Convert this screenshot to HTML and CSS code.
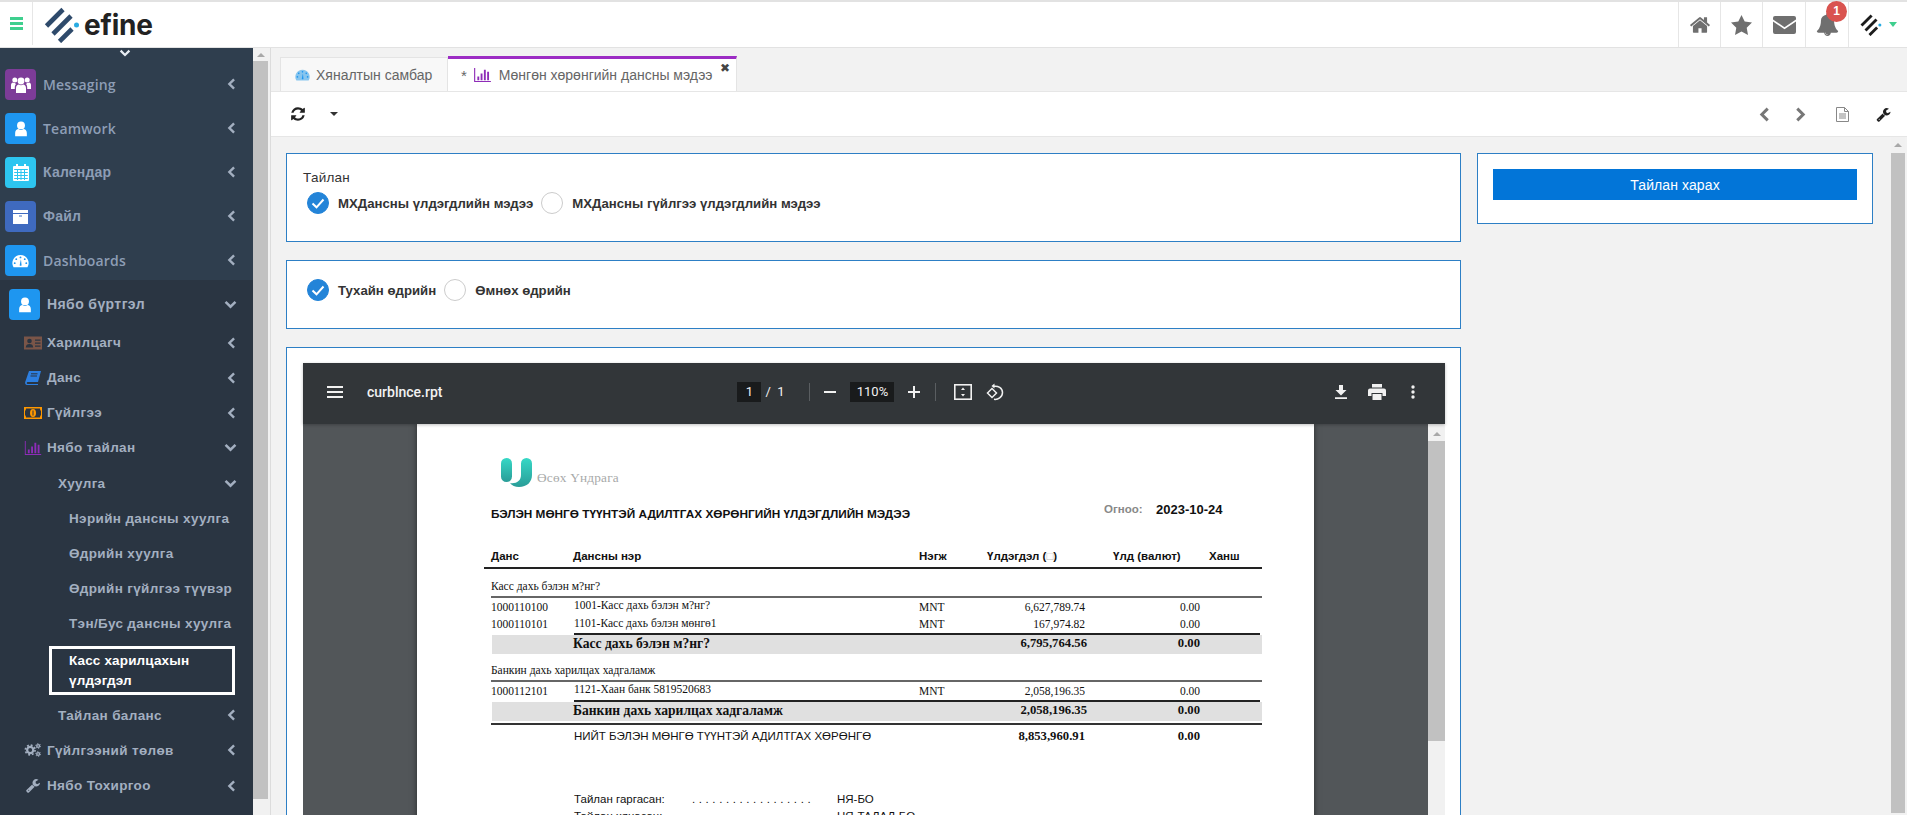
FILE: index.html
```html
<!DOCTYPE html>
<html lang="mn">
<head>
<meta charset="utf-8">
<title>efine</title>
<link rel="stylesheet" href="styles.css">
</head>
<body>
<svg class="defs" width="0" height="0" aria-hidden="true">
  <symbol id="chev-left" viewBox="0 0 10 14"><path d="M8 1.500 2.500 7 8 12.500" fill="none" stroke="currentColor" stroke-width="2.800"/></symbol>
  <symbol id="chev-down" viewBox="0 0 14 10"><path d="M1.500 2 7 7.500 12.500 2" fill="none" stroke="currentColor" stroke-width="2.800"/></symbol>
  <symbol id="user" viewBox="0 0 20 20"><circle cx="10" cy="6" r="4.400" fill="#fff"/><path d="M3.500 18v-3.500c0-3 2-4.500 3.600-4.500 1 .8 1.900 1.200 2.900 1.200s1.900-.4 2.900-1.200c1.600 0 3.600 1.500 3.600 4.500V18z" fill="#fff"/></symbol>
  <symbol id="gauge" viewBox="0 0 20 16"><path d="M10 1a9.500 9.500 0 0 0-8.200 14.300h16.400A9.500 9.500 0 0 0 10 1z" fill="currentColor"/><circle cx="10" cy="3.800" r="1.100" class="hole"/><circle cx="5" cy="5.800" r="1.100" class="hole"/><circle cx="15" cy="5.800" r="1.100" class="hole"/><circle cx="3.200" cy="10.500" r="1.100" class="hole"/><circle cx="16.800" cy="10.500" r="1.100" class="hole"/><path d="M9 13 10.500 6l.8 7a1.300 1.300 0 0 1-2.300 0z" class="hole"/></symbol>
  <symbol id="bars" viewBox="0 0 18 15"><path d="M.6 0v14.400H18" fill="none" stroke="currentColor" stroke-width="1.200"/><path d="M3.500 9h2v4h-2zM7 6h2v7H7zM10.500 2h2v11h-2zM14 4h2v9h-2z" fill="currentColor"/></symbol>
  <symbol id="mark" viewBox="0 0 36 36"><g fill="none" stroke="currentColor" stroke-width="4.600"><path d="M2.500 19 19 2.500"/><path d="M9 27 27 9"/><path d="M15.500 34.500 28 22"/></g><circle cx="32.500" cy="18" r="2.500" fill="#29abe2"/></symbol>
  <symbol id="wrench" viewBox="0 0 1792 1792"><path fill="currentColor" d="M448 1472q0-26-19-45t-45-19-45 19-19 45 19 45 45 19 45-19 19-45zm644-420l-682 682q-37 37-90 37-52 0-91-37l-106-108q-38-36-38-90 0-53 38-91l681-681q39 98 114.500 173.500t173.500 114.500zm634-435q0 39-23 106-47 134-164.500 217.500t-258.500 83.500q-185 0-316.500-131.500t-131.500-316.500 131.500-316.500 316.500-131.500q58 0 121.500 16.500t107.500 46.500q16 11 16 28t-16 28l-293 169v224l193 107q5-3 79-48.500t135.500-81 70.500-35.500q15 0 23.500 10t8.500 25z"/></symbol>
</svg>

<header class="topbar">
  <button class="hamburger" aria-label="menu"><i></i><i></i><i></i></button>
  <div class="brand">
    <svg class="brand-mark"><use href="#mark"/></svg>
    <span class="brand-name">efine</span>
  </div>
  <nav class="top-actions">
    <a class="top-action">
      <svg width="22" height="22" viewBox="0 0 1792 1792"><path fill="#6f6f6f" d="M1472 992v480q0 26-19 45t-45 19h-384v-384h-256v384h-384q-26 0-45-19t-19-45v-480q0-1 .5-3t.5-3l575-474 575 474q1 2 1 6zm223-69l-62 74q-8 9-21 11h-3q-13 0-21-7l-692-577-692 577q-12 8-24 7-13-2-21-11l-62-74q-8-10-7-23.500t11-21.500l719-599q32-26 76-26t76 26l244 204v-195q0-14 9-23t23-9h192q14 0 23 9t9 23v408l219 182q10 8 11 21.500t-7 23.500z"/></svg>
    </a>
    <a class="top-action">
      <svg width="21" height="20" viewBox="0 0 21 20"><path d="m10.500 0 3.200 6.600 7.300 1-5.300 5.100 1.300 7.300-6.500-3.500L4 20l1.300-7.300L0 7.600l7.300-1z" fill="#6f6f6f"/></svg>
    </a>
    <a class="top-action">
      <svg width="23" height="18" viewBox="0 0 23 18"><path d="M2 0h19a2 2 0 0 1 2 2v1.500l-11.500 7.700L0 3.500V2a2 2 0 0 1 2-2z" fill="#6f6f6f"/><path d="M0 5.500l11.500 7.700L23 5.500V16a2 2 0 0 1-2 2H2a2 2 0 0 1-2-2z" fill="#6f6f6f"/></svg>
    </a>
    <a class="top-action bell">
      <svg width="23" height="23" viewBox="0 0 1792 1792"><path fill="#6f6f6f" d="M912 1696q0-16-16-16-59 0-101.500-42.500t-42.500-101.500q0-16-16-16t-16 16q0 73 51.500 124.500t124.500 51.500q16 0 16-16zm816-288q0 52-38 90t-90 38h-448q0 106-75 181t-181 75-181-75-75-181h-448q-52 0-90-38t-38-90q50-42 91-88t85-119.500 74.500-158.500 50-206 19.500-260q0-152 117-282.500t307-158.500q-8-19-8-39 0-40 28-68t68-28 68 28 28 68q0 20-8 39 190 28 307 158.500t117 282.500q0 139 19.500 260t50 206 74.500 158.500 85 119.500 91 88z"/></svg>
      <span class="badge">1</span>
    </a>
    <a class="top-action user-menu">
      <svg class="mini-mark"><use href="#mark"/></svg>
      <span class="caret-green"></span>
    </a>
  </nav>
</header>

<div class="shell">
  <aside class="sidebar">
    <div class="side-top">
      <div class="side-more"><svg width="12" height="8"><use href="#chev-down"/></svg></div>
      <a class="mod"><span class="mod-ico purple"><svg width="20" height="18" viewBox="0 0 20 18"><circle cx="10" cy="5" r="3.400" fill="#fff"/><circle cx="3.800" cy="4" r="2.500" fill="#fff"/><circle cx="16.200" cy="4" r="2.500" fill="#fff"/><path d="M5 17v-5c0-2 1.500-3.500 2.800-3.500.7.500 1.400.8 2.200.8s1.500-.3 2.200-.8C13.500 8.500 15 10 15 12v5z" fill="#fff"/><path d="M0 13V9c0-1.500 1-2.500 2-2.500.5.400 1.200.6 1.800.6L5 8c-.8.8-1.200 2-1.200 3.500V13zM20 13V9c0-1.500-1-2.500-2-2.500-.5.400-1.200.6-1.800.6L15 8c.8.800 1.200 2 1.200 3.500V13z" fill="#fff"/></svg></span><span class="mod-label latin">Messaging</span><svg class="chev"><use href="#chev-left"/></svg></a>
      <a class="mod"><span class="mod-ico blue"><svg width="18" height="18"><use href="#user"/></svg></span><span class="mod-label latin">Teamwork</span><svg class="chev"><use href="#chev-left"/></svg></a>
      <a class="mod"><span class="mod-ico cyan"><svg width="16" height="17" viewBox="0 0 16 17"><path d="M1 2h14a1 1 0 0 1 1 1v13a1 1 0 0 1-1 1H1a1 1 0 0 1-1-1V3a1 1 0 0 1 1-1z" fill="#fff"/><path d="M3 0h2v3.500H3zM11 0h2v3.500h-2z" fill="#fff"/><path d="M1.200 5.500h13.600M1.200 8.500h13.600M1.200 11.500h13.600M1.200 14.500h13.600M4.500 5v11M8 5v11M11.500 5v11" stroke="#2dc5f0" stroke-width="1"/></svg></span><span class="mod-label">Календар</span><svg class="chev"><use href="#chev-left"/></svg></a>
      <a class="mod"><span class="mod-ico indigo"><svg width="15" height="14" viewBox="0 0 15 14"><path d="M0 0h15v3H0z" fill="#fff"/><path d="M0 4h15v10H0z" fill="#fff"/><path d="M6 5.500h3v1H6z" fill="#3f6abf"/></svg></span><span class="mod-label">Файл</span><svg class="chev"><use href="#chev-left"/></svg></a>
      <a class="mod"><span class="mod-ico blue"><svg class="gauge-white" width="17" height="14"><use href="#gauge"/></svg></span><span class="mod-label latin">Dashboards</span><svg class="chev"><use href="#chev-left"/></svg></a>
    </div>
    <div class="side-open">
      <a class="mod open"><span class="mod-ico blue"><svg width="18" height="18"><use href="#user"/></svg></span><span class="mod-label">Нябо бүртгэл</span><svg class="chevd"><use href="#chev-down"/></svg></a>
      <ul class="tree">
        <li class="node"><svg class="node-ico" viewBox="0 0 18 13"><rect width="18" height="13" fill="#7a5548"/><circle cx="5.500" cy="4.500" r="2.300" fill="#2a3441"/><path d="M1.800 11c0-2.400 1.500-3.500 3.700-3.500s3.700 1.100 3.700 3.500zM11 3h5.500v1.200H11zM11 6h5.500v1.200H11zM11 9h5.500v1.200H11z" fill="#2a3441"/></svg><span>Харилцагч</span><svg class="chev"><use href="#chev-left"/></svg></li>
        <li class="node"><svg class="node-ico" viewBox="0 0 16 14"><path d="M4 0h12l-3 11H2.500c-1 0-1 2 0 2H13v1H2c-1.500 0-2.200-1.500-1.800-3z" fill="#2d7fe0"/><path d="M6 2.800h6.500M5.500 5h6.500" stroke="#2a3441" stroke-width="1"/></svg><span>Данс</span><svg class="chev"><use href="#chev-left"/></svg></li>
        <li class="node"><svg class="node-ico" viewBox="0 0 18 12"><rect width="18" height="12" fill="#ff9800"/><path d="M2 1.500h14c0 1 .5 2 1 2.500v4c-.5.500-1 1.500-1 2.500H2C2 9.500 1.500 8.500 1 8V4c.5-.5 1-1.500 1-2.500z" fill="#2a3441"/><ellipse cx="9" cy="6" rx="3" ry="4" fill="#ff9800"/><path d="M8.500 3.500h1v5h-1z" fill="#2a3441"/></svg><span>Гүйлгээ</span><svg class="chev"><use href="#chev-left"/></svg></li>
        <li class="node"><svg class="node-ico bars-purple" viewBox="0 0 18 15"><use href="#bars"/></svg><span>Нябо тайлан</span><svg class="chevd"><use href="#chev-down"/></svg></li>
        <li class="node lvl2"><span>Хуулга</span><svg class="chevd"><use href="#chev-down"/></svg></li>
        <li class="node lvl3"><span>Нэрийн дансны хуулга</span></li>
        <li class="node lvl3"><span>Өдрийн хуулга</span></li>
        <li class="node lvl3"><span>Өдрийн гүйлгээ түүвэр</span></li>
        <li class="node lvl3"><span>Тэн/Бус дансны хуулга</span></li>
        <li class="node selected"><span>Касс харилцахын үлдэгдэл</span></li>
        <li class="node lvl2 lvl2b"><span>Тайлан баланс</span><svg class="chev"><use href="#chev-left"/></svg></li>
        <li class="node"><svg class="node-ico" viewBox="0 0 18 15"><g fill="none" stroke="#a3afc0"><circle cx="6" cy="7.500" r="3.300" stroke-width="2.400"/><circle cx="6" cy="7.500" r="5.200" stroke-width="1.800" stroke-dasharray="2 2.080"/><circle cx="14.500" cy="3.200" r="1.500" stroke-width="1.500"/><circle cx="14.500" cy="3.200" r="2.600" stroke-width="1" stroke-dasharray="1.300 1.420"/><circle cx="14.500" cy="11.800" r="1.500" stroke-width="1.500"/><circle cx="14.500" cy="11.800" r="2.600" stroke-width="1" stroke-dasharray="1.300 1.420"/></g></svg><span>Гүйлгээний төлөв</span><svg class="chev"><use href="#chev-left"/></svg></li>
        <li class="node"><svg class="node-ico wrench-side"><use href="#wrench"/></svg><span>Нябо Тохиргоо</span><svg class="chev"><use href="#chev-left"/></svg></li>
      </ul>
    </div>
  </aside>

  <div class="side-scroll"><span class="arrow-up"></span><span class="thumb"></span></div>

  <main class="main">
    <div class="tabs">
      <a class="tab"><svg class="gauge-sky" width="15" height="12"><use href="#gauge"/></svg>Хяналтын самбар</a>
      <a class="tab active"><span class="star">*</span><svg class="bars-purple" width="17" height="14" viewBox="0 0 18 15"><use href="#bars"/></svg><span class="tab-text">Мөнгөн хөрөнгийн дансны мэдээ</span><span class="tab-close">✖</span></a>
    </div>
    <div class="toolbar">
      <svg class="refresh" width="16" height="16" viewBox="0 0 1792 1792"><path fill="#222" d="M1639 1056q0 5-1 7-64 268-268 434.500t-478 166.500q-146 0-282.500-55t-243.500-157l-129 129q-19 19-45 19t-45-19-19-45v-448q0-26 19-45t45-19h448q26 0 45 19t19 45-19 45l-137 137q71 66 161 102t187 36q134 0 250-65t186-179q11-17 53-117 8-23 30-23h192q13 0 22.500 9.500t9.500 22.500zm25-800v448q0 26-19 45t-45 19h-448q-26 0-45-19t-19-45 19-45l138-138q-148-137-349-137-134 0-250 65t-186 179q-11 17-53 117-8 23-30 23h-199q-13 0-22.500-9.500t-9.500-22.500v-7q65-268 270-434.500t480-166.500q146 0 284 55.500t245 156.500l130-129q19-19 45-19t45 19 19 45z"/></svg>
      <span class="caret-dark"></span>
      <span class="spacer"></span>
      <svg class="tool-nav" width="11" height="15"><use href="#chev-left"/></svg>
      <svg class="tool-nav flip" width="11" height="15"><use href="#chev-left"/></svg>
      <svg class="tool-file" width="13" height="15" viewBox="0 0 13 15"><path d="M.5.500h8l4 4v10H.5z" fill="#fff" stroke="#888"/><path d="M8.500.500v4h4M3 7h7M3 9h7M3 11h7" fill="none" stroke="#888"/></svg>
      <svg class="tool-wrench" width="15" height="15"><use href="#wrench"/></svg>
    </div>
    <div class="content">
      <div class="content-body">
        <div class="col-main">
          <section class="panel panel-report">
            <div class="panel-title">Тайлан</div>
            <div class="radios">
              <label class="radio on"><span class="dot"><svg width="14" height="11" viewBox="0 0 14 11"><path d="M1.500 5.500 5.500 9.300 12.500 1.500" fill="none" stroke="#fff" stroke-width="2"/></svg></span>МХДансны үлдэгдлийн мэдээ</label>
              <label class="radio"><span class="dot"></span>МХДансны гүйлгээ үлдэгдлийн мэдээ</label>
            </div>
          </section>
          <section class="panel panel-date">
            <div class="radios">
              <label class="radio on"><span class="dot"><svg width="14" height="11" viewBox="0 0 14 11"><path d="M1.500 5.500 5.500 9.300 12.500 1.500" fill="none" stroke="#fff" stroke-width="2"/></svg></span>Тухайн өдрийн</label>
              <label class="radio"><span class="dot"></span>Өмнөх өдрийн</label>
            </div>
          </section>
          <section class="panel panel-pdf">
            <div class="viewer">
              <div class="pdf-bar">
                <svg class="pdf-menu" width="16" height="12" viewBox="0 0 16 12"><path d="M0 0h16v2H0zM0 5h16v2H0zM0 10h16v2H0z" fill="#f1f1f1"/></svg>
                <span class="pdf-name">curblnce.rpt</span>
                <div class="pdf-center">
                  <span class="pdf-box page-box">1</span>
                  <span class="pdf-count">/&nbsp;&nbsp;1</span>
                  <i class="pdf-sep"></i>
                  <svg width="12" height="2"><rect width="12" height="2" fill="#f1f1f1"/></svg>
                  <span class="pdf-box zoom-box">110%</span>
                  <svg width="12" height="12"><path d="M5 0h2v5h5v2H7v5H5V7H0V5h5z" fill="#f1f1f1"/></svg>
                  <i class="pdf-sep sep2"></i>
                  <svg class="pdf-fit" width="18" height="16" viewBox="0 0 18 16"><rect x=".8" y=".8" width="16.400" height="14.400" fill="none" stroke="#f1f1f1" stroke-width="1.600"/><path d="M9 3.500 11 6H7zM9 12.500 7 10h4z" fill="#f1f1f1"/></svg>
                  <svg class="pdf-rot" width="18" height="18" viewBox="0 0 18 18"><path d="M1.500 10 6 5.500l4.500 4.500L6 14.500z" fill="none" stroke="#f1f1f1" stroke-width="1.500"/><path d="M7.500 3.300c4.500-.8 9 1.500 9 6.200S11.800 17 8 16.300" fill="none" stroke="#f1f1f1" stroke-width="1.500"/><path d="M8.500.5v5l-3-2.500z" fill="#f1f1f1"/></svg>
                </div>
                <div class="pdf-right">
                  <svg width="12" height="14" viewBox="0 0 12 14"><path d="M4 0h4v5h3.500L6 10.500.5 5H4zM0 12.300h12V14H0z" fill="#f1f1f1"/></svg>
                  <svg width="18" height="16" viewBox="0 0 18 16"><path d="M4 0h10v3.500H4zM2 4.500h14a2 2 0 0 1 2 2V12h-3.500V9h-11v3H0V6.500a2 2 0 0 1 2-2zM4.500 10h9v6h-9z" fill="#f1f1f1"/></svg>
                  <svg class="pdf-more" width="4" height="14" viewBox="0 0 4 14"><circle cx="2" cy="2" r="1.700" fill="#f1f1f1"/><circle cx="2" cy="7" r="1.700" fill="#f1f1f1"/><circle cx="2" cy="12" r="1.700" fill="#f1f1f1"/></svg>
                </div>
              </div>
              <div class="pdf-stage">
                <div class="pdf-well">
                  <article class="page">
                    <div class="doc-logo">
                      <svg width="31" height="29" viewBox="0 0 31 29"><defs><linearGradient id="lg" x1="0" y1="0" x2="0" y2="1"><stop offset="0" stop-color="#36d8c6"/><stop offset="1" stop-color="#2a9d98"/></linearGradient></defs><rect width="11" height="24" rx="5.500" fill="url(#lg)"/><path d="M20 5.500a5.500 5.500 0 0 1 11 0V17c0 7-5 12-13 12-4 0-7-1.500-9-4 6 1 11-2 11-8z" fill="url(#lg)"/></svg>
                      <span class="doc-brand">Өсөх Үндрага</span>
                    </div>
                    <div class="doc-title-row">
                      <span class="doc-title">БЭЛЭН МӨНГӨ ТҮҮНТЭЙ АДИЛТГАХ ХӨРӨНГИЙН ҮЛДЭГДЛИЙН МЭДЭЭ</span>
                      <span class="doc-date-label">Огноо:</span>
                      <span class="doc-date">2023-10-24</span>
                    </div>
                    <div class="row head"><span>Данс</span><span>Дансны нэр</span><span>Нэгж</span><span class="hbal">Үлдэгдэл (<b class="tofu">□</b>)</span><span class="hval">Үлд (валют)</span><span class="hrate">Ханш</span></div>
                    <div class="group">Касс дахь бэлэн м?нг?</div>
                    <div class="row line"><span>1000110100</span><span class="name">1001-Касс дахь бэлэн м?нг?</span><span>MNT</span><span class="num">6,627,789.74</span><span class="num">0.00</span></div>
                    <div class="row line short"><span>1000110101</span><span class="name">1101-Касс дахь бэлэн мөнгө1</span><span>MNT</span><span class="num">167,974.82</span><span class="num">0.00</span></div>
                    <div class="rule"></div>
                    <div class="row sum"><span></span><span class="sum-name">Касс дахь бэлэн м?нг?</span><span></span><span class="num">6,795,764.56</span><span class="num">0.00</span></div>
                    <div class="group second">Банкин дахь харилцах хадгаламж</div>
                    <div class="row line"><span>1000112101</span><span class="name">1121-Хаан банк 5819520683</span><span>MNT</span><span class="num">2,058,196.35</span><span class="num">0.00</span></div>
                    <div class="rule"></div>
                    <div class="row sum"><span></span><span class="sum-name">Банкин дахь харилцах хадгаламж</span><span></span><span class="num">2,058,196.35</span><span class="num">0.00</span></div>
                    <div class="rule full"></div>
                    <div class="row grand"><span></span><span class="grand-name">НИЙТ БЭЛЭН МӨНГӨ ТҮҮНТЭЙ АДИЛТГАХ ХӨРӨНГӨ</span><span></span><span class="num">8,853,960.91</span><span class="num">0.00</span></div>
                    <div class="sign first"><span class="sign-role">Тайлан гаргасан:</span><span class="sign-dots">. . . . . . . . . . . . . . . . . .</span><span>НЯ-БО</span></div>
                    <div class="sign"><span class="sign-role">Тайлан хянасан:</span><span class="sign-dots">. . . . . . . . . . . . . . . . . .</span><span>НЯ-ТАЛАЛ-БО</span></div>
                  </article>
                </div>
                <div class="pdf-scroll"><span class="arrow-up"></span><span class="thumb"></span></div>
              </div>
            </div>
          </section>
        </div>
        <aside class="col-side">
          <section class="panel panel-action"><button class="view-btn">Тайлан харах</button></section>
        </aside>
      </div>
      <div class="main-scroll"><span class="arrow-up"></span><span class="thumb"></span></div>
    </div>
  </main>
</div>
</body>
</html>
```
FILE: styles.css
```css
* { box-sizing: border-box; }
html, body { margin: 0; height: 815px; overflow: hidden; }
body { background: #f2f2f2; font-family: "Liberation Sans", Arial, sans-serif; color: #333; display: flex; flex-direction: column; }
.defs { position: absolute; }
a { color: inherit; text-decoration: none; }
svg { display: block; flex: none; }
.hole { fill: #1e96f0; }

/* top bar */
.topbar { height: 48px; flex: none; display: flex; align-items: stretch; background: #fff; border-top: 2px solid #e2e2e2; border-bottom: 1px solid #e2e2e2; }
.hamburger { width: 33px; border: 0; border-right: 1px solid #e6e6e6; background: #fff; display: flex; flex-direction: column; gap: 2.500px; justify-content: center; align-items: center; padding: 0; margin-bottom: 2px; }
.hamburger i { display: block; width: 13px; height: 2.500px; background: #3ecf8e; }
.brand { display: flex; align-items: center; padding-left: 11px; }
.brand-mark { width: 36px; height: 36px; color: #2e4a6b; }
.brand-name { font-family: "Inter", sans-serif; font-weight: 700; font-size: 28px; line-height: 1; color: #222; margin-left: 4px; letter-spacing: -.2px; }
.top-actions { margin-left: auto; display: flex; }
.top-action { width: 42px; border-left: 1px solid #e6e6e6; display: flex; align-items: center; justify-content: center; position: relative; }
.top-action:nth-child(3), .top-action:nth-child(4) { width: 43px; }
.badge { position: absolute; left: 20px; top: -1px; width: 21px; height: 21px; border-radius: 50%; background: #d9534f; color: #fff; font-size: 12px; font-weight: 700; line-height: 21px; text-align: center; }
.user-menu { width: 59px; justify-content: flex-start; padding-left: 11px; gap: 7px; }
.mini-mark { width: 22px; height: 22px; color: #1c1c1c; }
.caret-green { width: 0; height: 0; border: 4px solid transparent; border-top: 5px solid #3ecf8e; border-bottom: 0; }

/* sidebar */
.shell { flex: 1; min-height: 0; display: flex; }
.sidebar { width: 253px; flex: none; display: flex; flex-direction: column; background: #2a3542; overflow: hidden; }
.side-top { height: 232px; background: #2f3e4e; flex: none; }
.side-more { height: 21px; display: flex; justify-content: center; padding: 1px 4px 0 0; }
.side-more svg { color: #e8edf3; }
.mod { height: 44px; display: flex; align-items: flex-start; padding-left: 5px; color: #8d9db5; }
.mod-ico { width: 31px; height: 31px; border-radius: 4px; flex: none; display: flex; align-items: center; justify-content: center; color: #fff; }
.purple { background: #7d3c98; }
.blue { background: #1e96f0; }
.cyan { background: #2dc5f0; }
.indigo { background: #3f6abf; }
.gauge-white { color: #fff; }
.mod-label { margin-left: 7px; font-size: 14px; line-height: 31px; font-weight: 700; letter-spacing: .2px; }
.mod-label.latin { font-family: "Open Sans", sans-serif; font-weight: 600; font-size: 14px; }
.chev { width: 9px; height: 12px; margin-left: auto; margin-right: 17px; margin-top: 9px; color: #a3afc0; }
.chevd { width: 13px; height: 9px; margin-left: auto; margin-right: 16px; color: #a3afc0; }
.side-open { flex: 1; padding-top: 9px; }
.mod.open { padding-left: 9px; height: 36px; color: #a3afc0; }
.mod.open .chevd { margin-top: 11px; }
.mod.open .mod-label { letter-spacing: .4px; }
.tree { list-style: none; margin: 0; padding: 0; color: #a3afc0; font-size: 13.500px; font-weight: 700; letter-spacing: .35px; }
.node { height: 35.150px; display: flex; align-items: center; padding-left: 24px; }
.node-ico { width: 18px; height: 14px; margin-right: 5px; flex: none; }
.wrench-side { color: #a3afc0; height: 15px; }
.node .chev, .node .chevd { margin-top: 0; }
.node > span:first-child { margin-left: 23px; }
.node.lvl2 > span:first-child { margin-left: 34px; }
.node.lvl3 > span:first-child { margin-left: 45px; }
.node.selected { height: 49px; margin: 5px 18px 2.500px 49px; padding: 0 10px 0 17px; border: 3px solid #fff; color: #fff; line-height: 20px; letter-spacing: .15px; }
.node.selected > span:first-child { margin-left: 0; }
.bars-purple { color: #8e2cb8; }

.side-scroll { width: 18px; flex: none; background: #f1f1f1; border-right: 1px solid #dcdcdc; display: flex; flex-direction: column; align-items: center; padding: 5px 2px 0 0; }
.arrow-up { width: 0; height: 0; border: 4px solid transparent; border-bottom: 4px solid #a8a8a8; border-top: 0; flex: none; }
.thumb { display: block; background: #c1c1c1; width: 100%; }
.side-scroll .thumb { margin-top: 4px; height: 738px; }

/* main */
.main { flex: 1; min-width: 0; display: flex; flex-direction: column; }
.tabs { height: 43px; flex: none; display: flex; align-items: flex-end; padding-left: 9px; }
.tab { height: 34px; display: flex; align-items: center; gap: 6px; padding: 0 11px 0 14px; background: #f8f8f8; border: 1px solid #e4e4e4; border-bottom: 0; color: #666; font-size: 14px; width: 168px; }
.gauge-sky { color: #87c5ee; }
.gauge-sky .hole { fill: #fff; }
.tab.active { width: 289px; height: 35px; background: #fff; border-top: 3px solid #9c2cc4; border-left: 0; padding: 0 0 0 13px; position: relative; gap: 7px; }
.tab-text { margin-left: 1px; }
.star { font-size: 15px; }
.tab-close { position: absolute; right: 6px; top: 2px; font-size: 12px; color: #444; }
.toolbar { height: 46px; flex: none; background: #fff; border-top: 1px solid #e6e6e6; border-bottom: 1px solid #e6e6e6; display: flex; align-items: center; padding-left: 19px; }
.caret-dark { width: 0; height: 0; border: 4px solid transparent; border-top: 4px solid #333; border-bottom: 0; margin-left: 24px; }
.spacer { flex: 1; }
.tool-nav { color: #777; margin-right: 25px; }
.tool-nav.flip { transform: scaleX(-1); margin-right: 30px; }
.tool-file { margin-right: 27px; }
.tool-wrench { margin-right: 16px; color: #222; }

.content { flex: 1; min-height: 0; display: flex; }
.content-body { flex: 1; min-width: 0; display: flex; gap: 16px; padding: 16px 18px 0 15px; overflow: hidden; }
.col-main { width: 1175px; flex: none; display: flex; flex-direction: column; gap: 18px; }
.col-side { flex: 1; min-width: 0; }
.panel { background: #fff; border: 1px solid #2d7fc5; }
.panel-report { height: 89px; padding: 15px 15px 0 16px; flex: none; }
.panel-title { font-size: 13.500px; line-height: 18px; letter-spacing: .25px; color: #333; }
.radios { display: flex; gap: 8px; padding-left: 4px; margin-top: 3px; }
.panel-report .radios { margin-top: 5px; }
.radio { display: flex; align-items: center; gap: 9px; font-size: 13.200px; font-weight: 700; color: #333; }
.dot { width: 22px; height: 22px; border-radius: 50%; border: 1px solid #ccc; display: flex; align-items: center; justify-content: center; background: #fff; flex: none; }
.radio.on .dot { background: #2384d8; border-color: #2384d8; }
.panel-date { height: 69px; flex: none; padding: 15px 0 0 16px; }
.panel-pdf { flex: 1; min-height: 0; padding: 15px 15px 0 16px; border-bottom: 0; overflow: hidden; }
.viewer { height: 100%; display: flex; flex-direction: column; }
.pdf-bar { height: 61px; flex: none; background: #323639; display: flex; align-items: center; padding: 0 0 4px 24px; position: relative; z-index: 1; box-shadow: 0 1px 3px rgba(0,0,0,.25); color: #f1f1f1; }
.pdf-name { margin-left: 24px; font-family: "Roboto", sans-serif; font-weight: 500; font-size: 14px; }
.pdf-center { display: flex; align-items: center; margin-left: 295px; font-family: "Roboto", sans-serif; font-size: 13px; }
.pdf-box { height: 20px; background: #191b1c; display: flex; align-items: center; justify-content: center; }
.page-box { width: 24px; }
.pdf-count { margin-left: 4px; width: 44px; }
.pdf-sep { display: block; width: 1px; height: 18px; background: #5a5e61; margin-right: 14px; }
.zoom-box { width: 44px; margin: 0 14px; }
.sep2 { margin: 0 18px 0 15px; }
.pdf-rot { margin-left: 14px; }
.pdf-right { margin-left: auto; display: flex; align-items: center; gap: 21px; padding-right: 30px; }
.pdf-more { margin-left: 4px; }
.pdf-stage { flex: 1; min-height: 0; display: flex; }
.pdf-well { flex: 1; min-width: 0; background: #525659; padding-left: 114px; overflow: hidden; }
.pdf-scroll { width: 17px; flex: none; background: #f1f1f1; display: flex; flex-direction: column; align-items: center; padding-top: 8px; }
.pdf-scroll .thumb { margin-top: 5px; height: 300px; }
.main-scroll { width: 14px; flex: none; background: #f1f1f1; margin-right: 2px; display: flex; flex-direction: column; align-items: center; padding-top: 6px; }
.main-scroll .thumb { margin-top: 6px; height: 660px; }

/* document */
.page { width: 897px; height: 500px; background: #fff; box-shadow: 0 0 6px rgba(0,0,0,.5); padding: 34px 52px 0 74px; color: #111; font-family: "Liberation Serif", "Times New Roman", serif; font-size: 11.500px; }
.doc-logo { height: 29px; display: flex; align-items: flex-end; padding-left: 10px; gap: 5px; }
.doc-brand { color: #a7a9a9; font-size: 13.300px; letter-spacing: .2px; line-height: 19px; }
.doc-title-row { height: 26px; margin-top: 14px; display: flex; align-items: flex-start; font-family: "Liberation Sans", sans-serif; font-weight: 700; }
.doc-title { font-size: 11.800px; line-height: 14px; margin-top: 6px; width: 613px; white-space: nowrap; }
.doc-date-label { color: #888; font-size: 11.500px; line-height: 16px; width: 52px; }
.doc-date { font-size: 13px; line-height: 18px; }
.row { display: grid; grid-template-columns: 82px 346px 68px 98px 115px 62px; }
.row .num { text-align: right; }
.head { height: 22px; margin: 20px 0 0 -7px; padding-left: 7px; border-bottom: 2px solid #222; font-family: "Liberation Sans", sans-serif; font-weight: 700; font-size: 11.500px; line-height: 18px; }
.hval { padding-left: 28px; white-space: nowrap; }
.hbal { white-space: nowrap; }
.hrate { padding-left: 9px; }
.tofu { color: #bbb; font-weight: 400; }
.group { height: 29px; padding-top: 10px; line-height: 14px; border-bottom: 2px solid #666; }
.group.second { height: 28px; padding-top: 9px; }
.line { height: 18px; line-height: 18px; }
.line.short { height: 17px; line-height: 17px; }
.name { line-height: 14px; padding-left: 1px; }
.rule { height: 2px; margin: 0 2px 0 83px; background: #222; }
.rule.full { margin: 2px 0 0; background: #333; }
.sum { height: 19px; margin-left: 1px; background: #e0e0e0; font-weight: 700; font-size: 12.700px; line-height: 17px; grid-template-columns: 81px 346px 68px 98px 115px 63px; }
.sum .num:nth-child(4) { margin-right: -2px; }
.sum-name { white-space: nowrap; font-size: 13.600px; }
.grand { height: 22px; line-height: 22px; font-weight: 700; font-size: 12.700px; }
.grand-name { font-family: "Liberation Sans", sans-serif; font-weight: 400; font-size: 11.500px; white-space: nowrap; padding-left: 1px; }
.sign { display: flex; height: 17px; margin-left: 83px; font-family: "Liberation Sans", sans-serif; font-size: 11.500px; line-height: 16px; }
.sign.first { margin-top: 44px; }
.sign-role { width: 118px; }
.sign-dots { width: 145px; white-space: nowrap; letter-spacing: .2px; }

.panel-action { height: 71px; padding: 15px; }
.view-btn { width: 100%; height: 31px; border: 0; background: #0275d8; color: #fff; font: 14px "Liberation Sans", sans-serif; letter-spacing: .1px; display: block; }
```
